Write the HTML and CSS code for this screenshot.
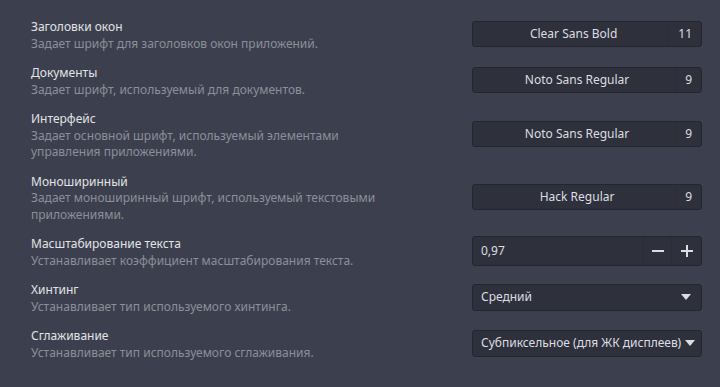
FILE: index.html
```html
<!DOCTYPE html>
<html lang="ru">
<head>
<meta charset="utf-8">
<link rel="stylesheet" href="styles.css">
</head>
<body>
<div class="settings">
  <div class="row">
    <div class="text">
      <div class="title">Заголовки окон</div>
      <div class="desc">Задает шрифт для заголовков окон приложений.</div>
    </div>
    <div class="control fontbtn">
      <span class="label">Clear Sans Bold</span>
      <span class="size">11</span>
    </div>
  </div>
  <div class="row">
    <div class="text">
      <div class="title">Документы</div>
      <div class="desc">Задает шрифт, используемый для документов.</div>
    </div>
    <div class="control fontbtn">
      <span class="label">Noto Sans Regular</span>
      <span class="size">9</span>
    </div>
  </div>
  <div class="row">
    <div class="text">
      <div class="title">Интерфейс</div>
      <div class="desc">Задает основной шрифт, используемый элементами управления приложениями.</div>
    </div>
    <div class="control fontbtn">
      <span class="label">Noto Sans Regular</span>
      <span class="size">9</span>
    </div>
  </div>
  <div class="row">
    <div class="text">
      <div class="title">Моноширинный</div>
      <div class="desc">Задает моноширинный шрифт, используемый текстовыми приложениями.</div>
    </div>
    <div class="control fontbtn">
      <span class="label">Hack Regular</span>
      <span class="size">9</span>
    </div>
  </div>
  <div class="row">
    <div class="text">
      <div class="title">Масштабирование текста</div>
      <div class="desc">Устанавливает коэффициент масштабирования текста.</div>
    </div>
    <div class="control spin">
      <span class="value">0,97</span>
      <span class="step"><svg width="12" height="12" viewBox="0 0 12 12"><rect x="0" y="5" width="12" height="2" fill="#dcdde1"/></svg></span>
      <span class="step plus"><svg width="12" height="12" viewBox="0 0 12 12"><rect x="0" y="5" width="12" height="2" fill="#dcdde1"/><rect x="5" y="0" width="2" height="12" fill="#dcdde1"/></svg></span>
    </div>
  </div>
  <div class="row">
    <div class="text">
      <div class="title">Хинтинг</div>
      <div class="desc">Устанавливает тип используемого хинтинга.</div>
    </div>
    <div class="control combo">
      <span class="value">Средний</span>
      <svg class="arrow" width="10" height="6" viewBox="0 0 10 6"><path d="M0 0 H10 L5 6 Z" fill="#dcdde1"/></svg>
    </div>
  </div>
  <div class="row">
    <div class="text">
      <div class="title">Сглаживание</div>
      <div class="desc">Устанавливает тип используемого сглаживания.</div>
    </div>
    <div class="control combo">
      <span class="value">Субпиксельное (для ЖК дисплеев)</span>
      <svg class="arrow" width="10" height="6" viewBox="0 0 10 6"><path d="M0 0 H10 L5 6 Z" fill="#dcdde1"/></svg>
    </div>
  </div>
</div>
</body>
</html>
```
FILE: styles.css
```css
html, body {
  margin: 0;
  padding: 0;
  background: #3c404e;
  width: 720px;
  height: 387px;
  overflow: hidden;
}
.settings {
  padding: 16px 18px 0 31px;
  font-family: "Noto Sans", sans-serif;
  font-size: 12px;
  line-height: 16.5px;
}
.row {
  display: flex;
  align-items: center;
  justify-content: space-between;
  margin-bottom: 10px;
}
.text {
  width: 345px;
  padding-top: 3px;
}
.title {
  color: #e2e3e6;
}
.desc {
  color: #8b8f9a;
}
.control {
  width: 230px;
  box-sizing: border-box;
  background: #2e313c;
  border: 1px solid #23262e;
  border-radius: 3px;
  color: #dcdde1;
  display: flex;
  align-items: stretch;
}
.fontbtn {
  height: 26px;
}
.fontbtn .label {
  flex: 1;
  display: flex;
  align-items: center;
  justify-content: center;
  padding-left: 6px;
}
.fontbtn .size {
  display: flex;
  align-items: center;
  padding: 0 9px;
  border-left: 1px solid #2a2d37;
}
.spin {
  height: 30px;
}
.spin .value {
  flex: 1;
  display: flex;
  align-items: center;
  padding-left: 8px;
}
.spin .step {
  width: 27px;
  display: flex;
  align-items: center;
  justify-content: center;
  border-left: 1px solid #292c36;
}
.spin .plus {
  width: 29px;
}
.combo {
  height: 27px;
  align-items: center;
  padding: 0 10px 0 8px;
}
.combo .value {
  flex: 1;
  white-space: nowrap;
}
.combo .arrow {
  flex: none;
  margin-left: 4px;
}
```
